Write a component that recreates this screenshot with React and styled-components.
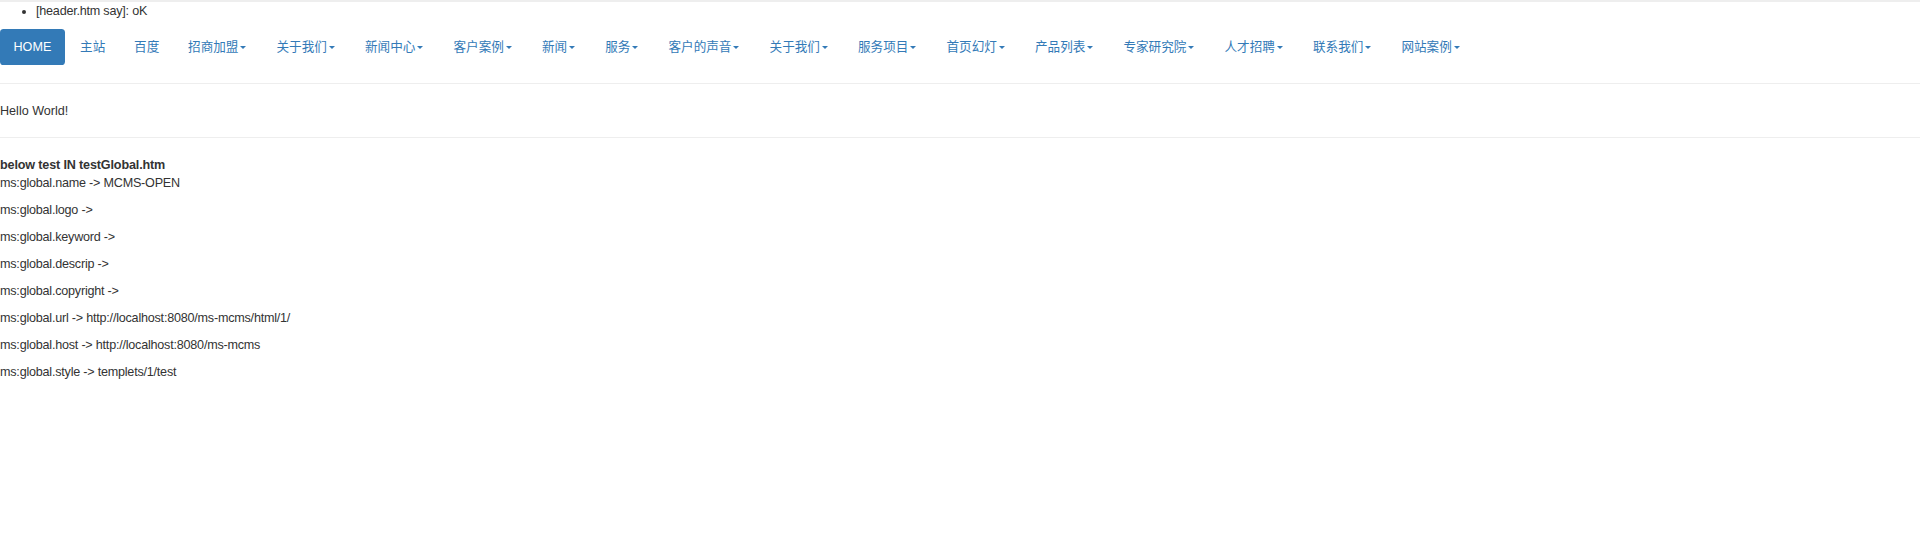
import React from 'react';
import styled, { createGlobalStyle } from 'styled-components';

// Page is a Bootstrap 3 layout seen at 90% zoom, so 14px -> 12.6px etc.
const GlobalStyle = createGlobalStyle`
  html, body {
    margin: 0;
    padding: 0;
    background: #fff;
  }
  body {
    font-family: "Liberation Sans", Arial, "Noto Sans CJK SC", sans-serif;
    font-size: 12.6px;
    line-height: 18px;
    letter-spacing: -0.22px;
    color: #333;
  }
`;

const Page = styled.div`
  border-top: 2px solid #eeeeee;
`;

const SayList = styled.ul`
  margin: 0 0 9px;
  padding-left: 36px;
`;

const Nav = styled.ul`
  display: flex;
  flex-wrap: wrap;
  list-style: none;
  margin: 0;
  padding: 0;
  letter-spacing: normal;
`;

const NavItem = styled.li`
  & + & {
    margin-left: 1.8px;
  }
`;

const NavLink = styled.a`
  display: block;
  padding: 9px 13.5px;
  border-radius: 3.6px;
  text-decoration: none;
  color: ${({ $active }) => ($active ? '#fff' : '#337ab7')};
  background: ${({ $active }) => ($active ? '#337ab7' : 'transparent')};
`;

const Caret = styled.span`
  display: inline-block;
  width: 0;
  height: 0;
  margin-left: 2px;
  margin-right: 1.3px;
  vertical-align: middle;
  border-top: 3px solid;
  border-left: 3px solid transparent;
  border-right: 3px solid transparent;
`;

const Rule = styled.hr`
  margin: ${({ $top }) => $top || '18px'} 0 18px;
  border: 0;
  border-top: 1px solid #eeeeee;
`;

const Hello = styled.div`
  letter-spacing: normal;
`;

const Line = styled.p`
  margin: 0 0 9px;
`;

const Title = styled.div`
  font-weight: bold;
  letter-spacing: -0.15px;
`;

const links = [
  { label: '主站' },
  { label: '百度' },
  { label: '招商加盟', caret: true },
  { label: '关于我们', caret: true },
  { label: '新闻中心', caret: true },
  { label: '客户案例', caret: true },
  { label: '新闻', caret: true },
  { label: '服务', caret: true },
  { label: '客户的声音', caret: true },
  { label: '关于我们', caret: true },
  { label: '服务项目', caret: true },
  { label: '首页幻灯', caret: true },
  { label: '产品列表', caret: true },
  { label: '专家研究院', caret: true },
  { label: '人才招聘', caret: true },
  { label: '联系我们', caret: true },
  { label: '网站案例', caret: true },
];

const globals = [
  'ms:global.logo ->',
  'ms:global.keyword ->',
  'ms:global.descrip ->',
  'ms:global.copyright ->',
  'ms:global.url -> http://localhost:8080/ms-mcms/html/1/',
  'ms:global.host -> http://localhost:8080/ms-mcms',
  'ms:global.style -> templets/1/test',
];

const App = () => {
  return (
    <Page>
      <GlobalStyle />
      <SayList>
        <li>[header.htm say]: oK</li>
      </SayList>

      <Nav>
        <NavItem>
          <NavLink href="#" $active>HOME</NavLink>
        </NavItem>
        {links.map((item, i) => (
          <NavItem key={i}>
            <NavLink href="#">
              {item.label}
              {item.caret && <Caret />}
            </NavLink>
          </NavItem>
        ))}
      </Nav>

      <Rule />
      <Hello>Hello World!</Hello>
      <Rule $top="17px" />

      <Title>below test IN testGlobal.htm</Title>
      <Line>ms:global.name -&gt; MCMS-OPEN</Line>
      {globals.map((text, i) => (
        <Line key={i}>{text}</Line>
      ))}
    </Page>
  );
};

export default App;
